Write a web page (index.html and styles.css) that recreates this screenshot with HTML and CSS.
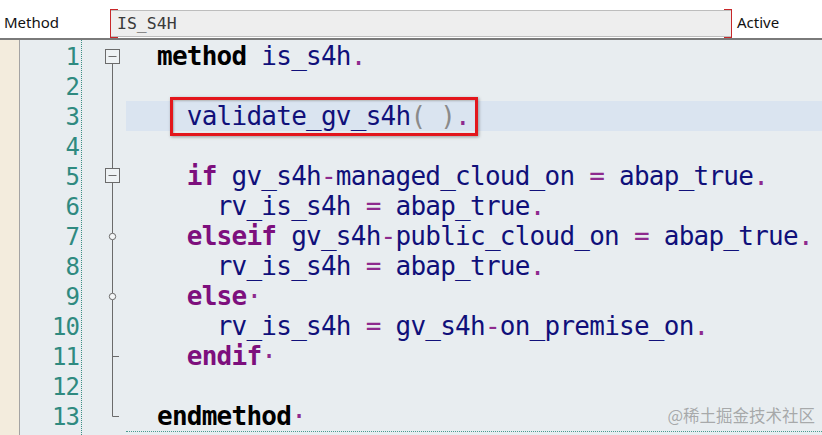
FILE: index.html
```html
<!DOCTYPE html>
<html lang="en">
  <head>
    <meta charset="UTF-8" />
    <title>Method IS_S4H</title>
    <link rel="stylesheet" href="styles.css">
  </head>
  <body>
    <div class="topbar">
      <span class="label">Method</span>
      <div class="field">
        <span class="field-text">IS_S4H</span>
      </div>
      <span class="status">Active</span>
    </div>

    <div class="editor">
      <div class="strip"></div>
      <div class="numbers">
        <div>1</div><div>2</div><div>3</div><div>4</div><div>5</div>
        <div>6</div><div>7</div><div>8</div><div>9</div><div>10</div>
        <div>11</div><div>12</div><div>13</div>
      </div>
      <div class="folds">
        <svg width="44" height="391" viewBox="0 0 44 391">
          <g stroke="#6b6b6b" stroke-width="1" fill="none">
            <line x1="30.5" y1="22.5" x2="30.5" y2="127.5" />
            <line x1="30.5" y1="141.5" x2="30.5" y2="375.5" />
            <rect x="23.5" y="8.5" width="14" height="14" fill="#eef2f4" />
            <line x1="26.5" y1="15.5" x2="34.5" y2="15.5" />
            <rect x="23.5" y="127.5" width="14" height="14" fill="#eef2f4" />
            <line x1="26.5" y1="134.5" x2="34.5" y2="134.5" />
            <circle cx="30.5" cy="195.5" r="3.2" fill="#f4f6f7" />
            <circle cx="30.5" cy="255.5" r="3.2" fill="#f4f6f7" />
            <line x1="30.5" y1="315.5" x2="37" y2="315.5" />
            <line x1="30.5" y1="375.5" x2="37" y2="375.5" />
          </g>
        </svg>
      </div>
      <div class="code">
        <div class="line"><span class="kw">method</span> <span class="id">is_s4h</span><span class="op">.</span></div>
        <div class="line"> </div>
        <div class="line current"> <span class="mark"> <span class="id">validate_gv_s4h</span><span class="par">( )</span><span class="op">.</span></span></div>
        <div class="line"> </div>
        <div class="line">  <span class="ctl">if</span> <span class="id">gv_s4h</span><span class="op">-</span><span class="id">managed_cloud_on</span> <span class="op">=</span> <span class="id">abap_true</span><span class="op">.</span></div>
        <div class="line">    <span class="id">rv_is_s4h</span> <span class="op">=</span> <span class="id">abap_true</span><span class="op">.</span></div>
        <div class="line">  <span class="ctl">elseif</span> <span class="id">gv_s4h</span><span class="op">-</span><span class="id">public_cloud_on</span> <span class="op">=</span> <span class="id">abap_true</span><span class="op">.</span></div>
        <div class="line">    <span class="id">rv_is_s4h</span> <span class="op">=</span> <span class="id">abap_true</span><span class="op">.</span></div>
        <div class="line">  <span class="ctl">else</span><span class="op">·</span></div>
        <div class="line">    <span class="id">rv_is_s4h</span> <span class="op">=</span> <span class="id">gv_s4h</span><span class="op">-</span><span class="id">on_premise_on</span><span class="op">.</span></div>
        <div class="line">  <span class="ctl">endif</span><span class="op">·</span></div>
        <div class="line"> </div>
        <div class="line"><span class="kw">endmethod</span><span class="op">·</span></div>
      </div>
      <div class="watermark">@稀土掘金技术社区</div>
    </div>
  </body>
</html>
```

FILE: styles.css
```css
* {
  margin: 0;
  padding: 0;
  box-sizing: border-box;
}

body {
  width: 822px;
  height: 435px;
  overflow: hidden;
  background-color: #e8edf0;
  font-family: "Noto Sans", "Open Sans", sans-serif;
}

.topbar {
  height: 40px;
  background-color: #fff;
  border-bottom: 2px solid #7a7a7a;
  display: flex;
  align-items: center;
  font-size: 15px;
  color: #111;
}

.label {
  width: 110px;
  padding-left: 4px;
  padding-top: 6px;
}

.field {
  width: 622px;
  height: 27px;
  margin-top: 8px;
  position: relative;
  background-color: #eeeeee;
  border-top: 1px solid #bdbdbd;
  border-bottom: 1px solid #bdbdbd;
  display: flex;
  align-items: center;
  padding-left: 7px;
}

.field::before,
.field::after {
  content: "";
  position: absolute;
  top: -2px;
  bottom: -2px;
  width: 7px;
  border: 1.5px solid #c8282a;
}

.field::before {
  left: 0;
  border-right: none;
}

.field::after {
  right: 0;
  border-left: none;
}

.field-text {
  font-family: "DejaVu Sans Mono", monospace;
  font-size: 16.5px;
  color: #3a3a3a;
}

.status {
  padding-left: 5px;
  padding-top: 6px;
}

.editor {
  position: relative;
  display: flex;
  height: 395px;
  padding-top: 1px;
}

.strip {
  width: 20px;
  margin-top: -1px;
  background-color: #f3ecdd;
  border-right: 1px solid #a3a3a3;
}

.numbers {
  width: 62px;
  padding-right: 2px;
  border-right: 1px dotted #3d8f86;
  margin-top: -1px;
  padding-top: 2px;
  font-family: "DejaVu Sans Mono", monospace;
  font-size: 24px;
  letter-spacing: -1px;
  line-height: 30px;
  color: #2f8a80;
  text-align: right;
}

.folds {
  width: 44px;
}

.folds svg {
  display: block;
}

.code {
  flex: 1;
  height: 391px;
  border-bottom: 1px dotted #4b9a90;
  font-family: "DejaVu Sans Mono", monospace;
  font-size: 26px;
  letter-spacing: -0.75px;
}

.line {
  height: 30px;
  line-height: 30px;
  padding-left: 31px;
  white-space: pre;
}

.line.current {
  background-color: #dae4f0;
}

.kw {
  font-weight: bold;
  color: #000;
}

.ctl {
  font-weight: bold;
  color: #7d0f7d;
}

.id {
  color: #10107a;
}

.op {
  color: #8e2a8e;
}

.par {
  color: #8a8a8a;
}

.mark {
  position: relative;
  display: inline-block;
}

.mark::after {
  content: "";
  position: absolute;
  left: -2px;
  right: -8px;
  top: -4px;
  bottom: -5px;
  border: 3px solid #e3161c;
  box-shadow: 1px 1px 3px rgba(0, 0, 0, 0.35), inset 1px 1px 2px rgba(0, 0, 0, 0.25);
}

.watermark {
  position: absolute;
  right: 7px;
  bottom: 8px;
  font-family: "Noto Sans CJK SC", sans-serif;
  font-size: 16.5px;
  color: rgba(110, 110, 110, 0.55);
}
```
